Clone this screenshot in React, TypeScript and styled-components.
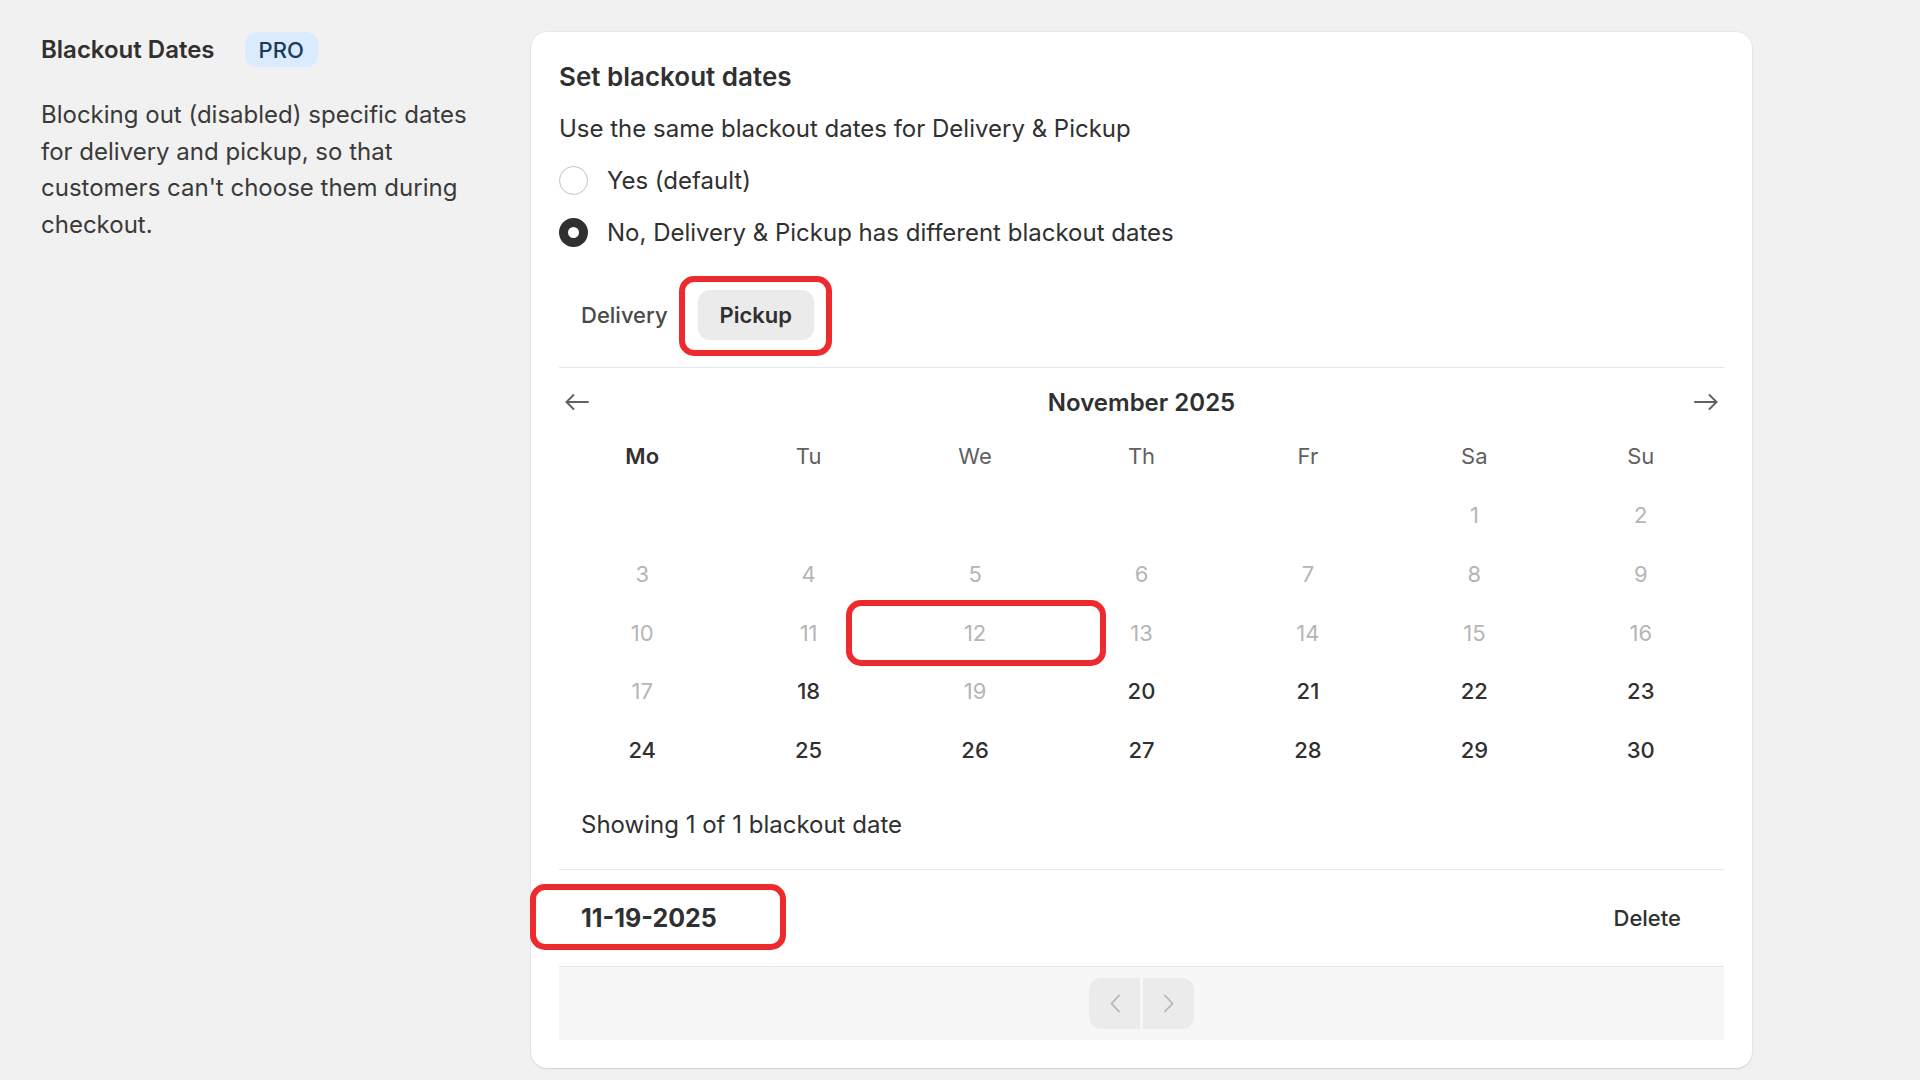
import React from "react";
import styled, { createGlobalStyle } from "styled-components";

const Global = createGlobalStyle`
  html, body { margin: 0; padding: 0; background: #f1f1f1; }
  body { font-family: Inter, "Noto Sans", sans-serif; color: #303030; -webkit-font-smoothing: antialiased; }
  * { box-sizing: border-box; }
`;

const Page = styled.div`
  display: grid;
  grid-template-columns: 450px 1221px;
  column-gap: 40px;
  padding: 32px 0 0 41px;
  min-height: 1080px;
  align-items: start;
`;

const Side = styled.div`
  display: flex;
  flex-direction: column;
  gap: 30px;
`;

const SideTitleRow = styled.div`
  display: flex;
  align-items: center;
  gap: 30px;
  height: 35px;
`;

const SideTitle = styled.h2`
  margin: 0;
  font-size: 24px;
  font-weight: 600;
  color: #303030;
`;

const Badge = styled.span`
  display: inline-flex;
  align-items: center;
  justify-content: center;
  height: 35px;
  padding: 0 14px;
  border-radius: 12px;
  background: #d9ebfc;
  color: #1b3a5c;
  font-size: 22px;
  font-weight: 450;
`;

const SideText = styled.p`
  margin: 0;
  font-size: 24px;
  line-height: 36.7px;
  color: #3a3a3a;
`;

const Card = styled.section`
  background: #ffffff;
  border-radius: 16px;
  box-shadow: 0 1px 2px rgba(0, 0, 0, 0.1), 0 0 0 1px rgba(0, 0, 0, 0.03);
  padding: 28px 28px 28px 28px;
  display: flex;
  flex-direction: column;
`;

const CardTitle = styled.h3`
  margin: 0;
  font-size: 26px;
  line-height: 34px;
  font-weight: 600;
  color: #303030;
`;

const Body = styled.div`
  font-size: 24px;
  line-height: 34px;
  color: #303030;
`;

const Question = styled(Body)`
  margin-top: 18px;
`;

const RadioGroup = styled.div`
  display: flex;
  flex-direction: column;
  gap: 18px;
  margin-top: 17px;
`;

const RadioRow = styled.label`
  display: flex;
  align-items: center;
  gap: 19px;
  height: 34px;
  font-size: 24px;
  color: #303030;
`;

const RadioDot = styled.span<{ $checked?: boolean }>`
  width: 29px;
  height: 29px;
  border-radius: 50%;
  background: #fff;
  border: ${(p) => (p.$checked ? "9.5px solid #303030" : "1.5px solid #c2c2c2")};
  flex: none;
`;

const Tabs = styled.div`
  display: flex;
  gap: 8px;
  margin-top: 41px;
`;

const Tab = styled.button<{ $active?: boolean }>`
  position: relative;
  height: 50px;
  padding: 0 22px;
  border: none;
  border-radius: 12px;
  background: ${(p) => (p.$active ? "#ebebeb" : "transparent")};
  color: ${(p) => (p.$active ? "#303030" : "#4a4a4a")};
  font-family: inherit;
  font-size: 22px;
  font-weight: ${(p) => (p.$active ? 600 : 500)};
`;

const Divider = styled.hr`
  margin: 0;
  border: none;
  border-top: 1.5px solid #e6e6e6;
`;

const TabsDivider = styled(Divider)`
  margin-top: 27px;
`;

const Highlight = styled.span<{ $l: number; $t: number; $r: number; $b: number }>`
  position: absolute;
  left: ${(p) => p.$l}px;
  top: ${(p) => p.$t}px;
  right: ${(p) => p.$r}px;
  bottom: ${(p) => p.$b}px;
  border: 6px solid #ee2a2f;
  border-radius: 15px;
  pointer-events: none;
`;

const CalHeader = styled.div`
  display: flex;
  align-items: center;
  justify-content: space-between;
  height: 50px;
  margin-top: 9px;
`;

const NavBtn = styled.button`
  width: 36px;
  height: 36px;
  display: flex;
  align-items: center;
  justify-content: center;
  border: none;
  background: transparent;
  padding: 0;
  color: #616161;
`;

const Month = styled.div`
  font-size: 24px;
  font-weight: 600;
  color: #303030;
`;

const Grid = styled.div`
  display: grid;
  grid-template-columns: repeat(7, 1fr);
  grid-auto-rows: 58.75px;
`;

const WeekDay = styled.div<{ $bold?: boolean }>`
  display: flex;
  align-items: center;
  justify-content: center;
  font-size: 22px;
  font-weight: ${(p) => (p.$bold ? 600 : 400)};
  color: ${(p) => (p.$bold ? "#303030" : "#616161")};
`;

const Day = styled.div<{ $disabled?: boolean }>`
  position: relative;
  display: flex;
  align-items: center;
  justify-content: center;
  font-size: 22px;
  font-weight: ${(p) => (p.$disabled ? 400 : 500)};
  color: ${(p) => (p.$disabled ? "#b5b5b5" : "#303030")};
`;

const Showing = styled(Body)`
  margin-top: 28px;
  padding-left: 22px;
`;

const ListDivider = styled(Divider)`
  margin-top: 27px;
`;

const ListRow = styled.div`
  display: flex;
  align-items: center;
  justify-content: space-between;
  height: 96px;
  padding: 0 43px 0 22px;
`;

const DateText = styled.span`
  position: relative;
  font-size: 25px;
  line-height: 34px;
  font-weight: 650;
  color: #303030;
`;

const DeleteBtn = styled.button`
  border: none;
  background: transparent;
  padding: 0;
  font-family: inherit;
  font-size: 22px;
  font-weight: 500;
  color: #303030;
`;

const Pager = styled.div`
  height: 74px;
  background: #f7f7f7;
  border-top: 1.5px solid #e6e6e6;
  display: flex;
  align-items: center;
  justify-content: center;
  gap: 3px;
`;

const PageBtn = styled.button<{ $side: "left" | "right" }>`
  width: 51px;
  height: 51px;
  border: none;
  background: #ebebeb;
  color: #b5b5b5;
  display: flex;
  align-items: center;
  justify-content: center;
  padding: 0;
  border-radius: ${(p) => (p.$side === "left" ? "12px 0 0 12px" : "0 12px 12px 0")};
`;

const Arrow = ({ dir }: { dir: "left" | "right" }) => (
  <svg width="24" height="16" viewBox="0 0 24 16" fill="none" stroke="currentColor" strokeWidth="1.9"
    strokeLinecap="round" strokeLinejoin="round" style={dir === "right" ? { transform: "scaleX(-1)" } : undefined}>
    <path d="M23 8H1.5" />
    <path d="M8.5 1L1.5 8l7 7" />
  </svg>
);

const Chevron = ({ dir }: { dir: "left" | "right" }) => (
  <svg width="12" height="19" viewBox="0 0 12 19" fill="none" stroke="currentColor" strokeWidth="1.8"
    strokeLinecap="round" strokeLinejoin="round" style={dir === "right" ? { transform: "scaleX(-1)" } : undefined}>
    <path d="M10 1.5L2.5 9.5l7.5 8" />
  </svg>
);

type Cell = { n?: number; off?: boolean; mark?: boolean };

const rows: Cell[][] = [
  [{}, {}, {}, {}, {}, { n: 1, off: true }, { n: 2, off: true }],
  [3, 4, 5, 6, 7, 8, 9].map((n) => ({ n, off: true })),
  [10, 11, 12, 13, 14, 15, 16].map((n) => ({ n, off: true, mark: n === 12 })),
  [
    { n: 17, off: true },
    { n: 18 },
    { n: 19, off: true },
    { n: 20 },
    { n: 21 },
    { n: 22 },
    { n: 23 },
  ],
  [24, 25, 26, 27, 28, 29, 30].map((n) => ({ n })),
];

const weekdays = ["Mo", "Tu", "We", "Th", "Fr", "Sa", "Su"];

export default function App() {
  return (
    <>
      <Global />
      <Page>
        <Side>
          <SideTitleRow>
            <SideTitle>Blackout Dates</SideTitle>
            <Badge>PRO</Badge>
          </SideTitleRow>
          <SideText>
            Blocking out (disabled) specific dates for delivery and pickup, so that customers can't choose them during
            checkout.
          </SideText>
        </Side>

        <Card>
          <CardTitle>Set blackout dates</CardTitle>
          <Question>Use the same blackout dates for Delivery &amp; Pickup</Question>
          <RadioGroup>
            <RadioRow>
              <RadioDot />
              Yes (default)
            </RadioRow>
            <RadioRow>
              <RadioDot $checked />
              No, Delivery &amp; Pickup has different blackout dates
            </RadioRow>
          </RadioGroup>

          <Tabs>
            <Tab>Delivery</Tab>
            <Tab $active>
              Pickup
              <Highlight $l={-19} $t={-14} $r={-18} $b={-16} />
            </Tab>
          </Tabs>
          <TabsDivider />

          <CalHeader>
            <NavBtn aria-label="Previous month">
              <Arrow dir="left" />
            </NavBtn>
            <Month>November 2025</Month>
            <NavBtn aria-label="Next month">
              <Arrow dir="right" />
            </NavBtn>
          </CalHeader>

          <Grid>
            {weekdays.map((d, i) => (
              <WeekDay key={d} $bold={i === 0}>
                {d}
              </WeekDay>
            ))}
            {rows.flat().map((c, i) => (
              <Day key={i} $disabled={c.off}>
                {c.n ?? ""}
                {c.mark && <Highlight $l={-46} $t={-3} $r={-48} $b={-4} />}
              </Day>
            ))}
          </Grid>

          <Showing>Showing 1 of 1 blackout date</Showing>
          <ListDivider />
          <ListRow>
            <DateText>
              11-19-2025
              <Highlight $l={-51} $t={-17} $r={-69} $b={-15} />
            </DateText>
            <DeleteBtn>Delete</DeleteBtn>
          </ListRow>
          <Pager>
            <PageBtn $side="left" aria-label="Previous page">
              <Chevron dir="left" />
            </PageBtn>
            <PageBtn $side="right" aria-label="Next page">
              <Chevron dir="right" />
            </PageBtn>
          </Pager>
        </Card>
      </Page>
    </>
  );
}
